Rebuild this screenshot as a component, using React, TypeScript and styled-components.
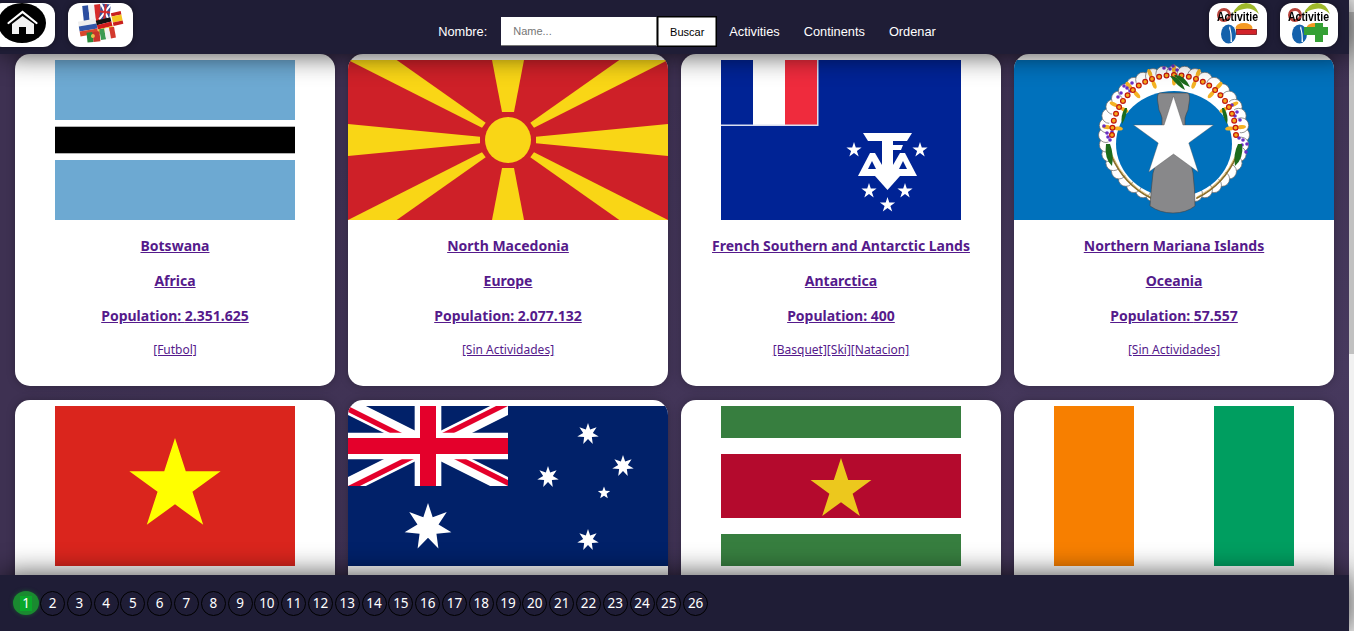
import React from 'react';
import styled, { createGlobalStyle } from 'styled-components';

const GlobalStyle = createGlobalStyle`
  html, body, #root {
    margin: 0;
    height: 100%;
    overflow: hidden;
  }
  body {
    font-family: "Noto Sans", "Liberation Sans", sans-serif;
  }
`;

const starPoints = (cx: number, cy: number, R: number, n = 5, ratio = 0.382) => {
  const pts: string[] = [];
  for (let i = 0; i < n * 2; i++) {
    const rad = i % 2 === 0 ? R : R * ratio;
    const a = -Math.PI / 2 + (i * Math.PI) / n;
    pts.push(`${(cx + rad * Math.cos(a)).toFixed(2)},${(cy + rad * Math.sin(a)).toFixed(2)}`);
  }
  return pts.join(' ');
};

const FlagSvg = styled.svg`
  display: block;
  height: 160px;
  flex: none;
`;

const Botswana = () => (
  <FlagSvg width="240" viewBox="0 0 240 160">
    <rect width="240" height="160" fill="#fff" />
    <rect width="240" height="60" fill="#6DA9D2" />
    <rect y="66.7" width="240" height="26.6" fill="#000" />
    <rect y="100" width="240" height="60" fill="#6DA9D2" />
  </FlagSvg>
);

const Macedonia = () => (
  <FlagSvg width="320" viewBox="0 0 320 160">
    <rect width="320" height="160" fill="#CE2028" />
    <g fill="#F9D616">
      <polygon points="144,0 176,0 166,52 154,52" />
      <polygon points="144,160 176,160 166,108 154,108" />
      <polygon points="0,64 0,96 132,83.3 132,76.7" />
      <polygon points="320,64 320,96 188,83.3 188,76.7" />
      <polygon points="0,0 48.7,0 137.7,62.7 134,67.7" />
      <polygon points="320,0 271.3,0 182.3,62.7 186,67.7" />
      <polygon points="0,160 48.7,160 137.7,97.3 134,92.3" />
      <polygon points="320,160 271.3,160 182.3,97.3 186,92.3" />
      <circle cx="160" cy="80" r="23" />
    </g>
  </FlagSvg>
);

const Taaf = () => (
  <FlagSvg width="240" viewBox="0 0 240 160">
    <rect width="240" height="160" fill="#002395" />
    <rect width="97.5" height="66" fill="#d9deef" />
    <rect width="32" height="64.5" fill="#002395" />
    <rect x="32" width="32" height="64.5" fill="#fff" />
    <rect x="64" width="32" height="64.5" fill="#EF2B3D" />
    <g fill="#fff">
      <polygon points="142,73 191,73 186,81 172,81 172,85 182,85 180,90 172,90 172,116 161,116 161,81 147,81" />
      <polygon points="137,116 149,93 154,93 161,105 161,116" />
      <polygon points="196,116 184,93 179,93 172,105 172,116" />
      <polygon points="154,116 179,116 166.5,130" />
    </g>
    <g fill="#002395">
      <polygon points="151,101 155,109 147,109" />
      <polygon points="182,101 178,109 186,109" />
    </g>
    <g fill="#fff">
      {[[133, 90], [199, 90], [148, 131], [184, 131], [166.5, 145]].map(([x, y]) => (
        <polygon key={`${x}-${y}`} points={starPoints(x, y, 8)} />
      ))}
    </g>
  </FlagSvg>
);

const scallops = Array.from({ length: 40 }, (_, i) => (i / 40) * Math.PI * 2);
const beads = Array.from({ length: 27 }, (_, i) => Math.PI + (i / 26) * Math.PI);
const purple = [
  [113, 28], [107, 33], [118, 23], [110, 26], [116, 31], [104, 37], [223, 52], [226, 60], [218, 45], [221, 56],
  [93, 73], [96, 80], [90, 66], [94, 77], [98, 72], [228, 85], [232, 92], [225, 78], [229, 80], [233, 84],
  [156, 9], [163, 10], [150, 8], [159, 6],
];

const Mariana = () => (
  <FlagSvg width="320" viewBox="0 0 320 160">
    <rect width="320" height="160" fill="#0071BC" />
    {scallops.map((a) => (
      <circle
        key={a}
        cx={160 + 68 * Math.cos(a)}
        cy={75 + 62 * Math.sin(a)}
        r="7.5"
        fill="#fff"
        stroke="#666"
        strokeWidth="0.7"
      />
    ))}
    <ellipse cx="160" cy="75" rx="66" ry="60" fill="#fff" />
    <ellipse cx="160" cy="84" rx="58" ry="53" fill="#0071BC" />
    <g fill="none" strokeLinecap="round">
      <path d="M97 95Q110 125 137 138" stroke="#8a6d2a" strokeWidth="1.8" />
      <path d="M223 95Q210 125 183 138" stroke="#8a6d2a" strokeWidth="1.8" />
      <path d="M98 95Q111 124 137 137" stroke="#d0a030" strokeWidth="0.6" />
      <path d="M222 95Q209 124 183 137" stroke="#d0a030" strokeWidth="0.6" />
    </g>
    <g fill="#F5B324">
      {beads.filter((_, i) => i % 3 === 1).flatMap((a) => {
        const deg = (a * 180) / Math.PI + 90;
        return [6, -6].map((off) => {
          const cx = 160 + (62 + off) * Math.cos(a);
          const cy = 75 + (60 + off) * Math.sin(a);
          return <ellipse key={`${a}-${off}`} cx={cx} cy={cy} rx="2" ry="4.5" transform={`rotate(${deg} ${cx} ${cy})`} />;
        });
      })}
    </g>
    <g fill="#6a2fc4">
      {purple.map(([x, y]) => (
        <circle key={`${x}-${y}`} cx={x} cy={y} r="1.8" />
      ))}
    </g>
    {beads.map((a) => (
      <circle
        key={a}
        cx={160 + 62 * Math.cos(a)}
        cy={75 + 60 * Math.sin(a)}
        r="2.4"
        fill="#F7A81B"
        stroke="#C1170F"
        strokeWidth="1.2"
      />
    ))}
    <g fill="#1c6b1c">
      <path d="M92 84Q90 98 98 106Q100 94 96 84Z" />
      <path d="M228 84Q230 98 221 106Q219 94 224 84Z" />
      <path d="M156 16Q166 16 171 30Q163 26 156 16Z" />
      <path d="M160 15Q170 14 176 27Q167 24 160 15Z" />
      <path d="M111 48Q106 56 108 64Q113 56 113 48Z" />
      <path d="M210 48Q215 56 213 64Q208 56 208 48Z" />
    </g>
    <path
      d="M146 33H173Q176 33 175.5 40L174 50Q172 54 171 58L171 70L176 100L179 113Q181 130 181 146Q172 153 159 153Q146 153 136 146Q137 130 139 113L143 100L148 70L148 58Q147 54 145 50L143.5 40Q143 33 146 33Z"
      fill="#88888a"
      stroke="#444"
      strokeWidth="0.6"
    />
    <polygon points={starPoints(159.5, 78, 42)} fill="#fff" stroke="#555" strokeWidth="0.4" />
  </FlagSvg>
);

const Vietnam = () => (
  <FlagSvg width="240" viewBox="0 0 240 160">
    <rect width="240" height="160" fill="#DA251D" />
    <polygon points={starPoints(120, 80, 48)} fill="#FF0" />
  </FlagSvg>
);

const Australia = () => (
  <FlagSvg width="320" viewBox="0 0 320 160">
    <rect width="320" height="160" fill="#012169" />
    <svg width="160" height="80" viewBox="0 0 60 30">
      <clipPath id="jack-t">
        <path d="M30,15 h30 v15 z v15 h-30 z h-30 v-15 z v-15 h30 z" />
      </clipPath>
      <path d="M0,0 L60,30 M60,0 L0,30" stroke="#fff" strokeWidth="6" />
      <path d="M0,0 L60,30 M60,0 L0,30" clipPath="url(#jack-t)" stroke="#E4002B" strokeWidth="4" />
      <path d="M30,0 v30 M0,15 h60" stroke="#fff" strokeWidth="10" />
      <path d="M30,0 v30 M0,15 h60" stroke="#E4002B" strokeWidth="6" />
    </svg>
    <g fill="#fff">
      <polygon points={starPoints(80, 121, 24, 7, 0.45)} />
      <polygon points={starPoints(240, 28, 11, 7, 0.45)} />
      <polygon points={starPoints(275, 60, 11, 7, 0.45)} />
      <polygon points={starPoints(200, 71, 11, 7, 0.45)} />
      <polygon points={starPoints(256, 87, 6.5, 5, 0.42)} />
      <polygon points={starPoints(240, 134, 11, 7, 0.45)} />
    </g>
  </FlagSvg>
);

const Suriname = () => (
  <FlagSvg width="240" viewBox="0 0 240 160">
    <rect width="240" height="160" fill="#fff" />
    <rect width="240" height="32" fill="#377E3F" />
    <rect y="48" width="240" height="64" fill="#B40A2D" />
    <rect y="128" width="240" height="32" fill="#377E3F" />
    <polygon points={starPoints(120, 84, 32)} fill="#ECC81D" />
  </FlagSvg>
);

const Ivory = () => (
  <FlagSvg width="240" viewBox="0 0 240 160">
    <rect width="240" height="160" fill="#fff" />
    <rect width="80" height="160" fill="#F77F00" />
    <rect x="160" width="80" height="160" fill="#009E60" />
  </FlagSvg>
);

const countries = [
  { id: 'bw', flag: <Botswana />, info: { name: 'Botswana', continent: 'Africa', population: '2.351.625', activities: ['Futbol'] } },
  { id: 'mk', flag: <Macedonia />, info: { name: 'North Macedonia', continent: 'Europe', population: '2.077.132', activities: ['Sin Actividades'] } },
  { id: 'tf', flag: <Taaf />, info: { name: 'French Southern and Antarctic Lands', continent: 'Antarctica', population: '400', activities: ['Basquet', 'Ski', 'Natacion'] } },
  { id: 'mp', flag: <Mariana />, info: { name: 'Northern Mariana Islands', continent: 'Oceania', population: '57.557', activities: ['Sin Actividades'] } },
  { id: 'vn', flag: <Vietnam /> },
  { id: 'au', flag: <Australia /> },
  { id: 'sr', flag: <Suriname /> },
  { id: 'ci', flag: <Ivory /> },
];

const Shell = styled.div`
  display: flex;
  height: 100vh;
  overflow: hidden;
`;

const Column = styled.div`
  flex: 1;
  min-width: 0;
  display: flex;
  flex-direction: column;
`;

const ScrollRail = styled.div`
  width: 5px;
  flex: none;
  background: #f1f1f1;
  padding-top: 12px;
`;

const ScrollThumb = styled.div`
  height: 342px;
  background: #c1c1c1;
`;

const Header = styled.header`
  position: relative;
  z-index: 2;
  flex: none;
  height: 54px;
  box-sizing: border-box;
  padding: 3px 11px 0 0;
  display: flex;
  justify-content: space-between;
  align-items: flex-start;
  background: #1f1d36;
  box-shadow: 0 0 28px rgba(0, 0, 0, 0.75);
`;

const IconGroup = styled.div`
  display: flex;
  gap: 13px;
`;

const HomeGroup = styled(IconGroup)`
  margin-left: -10px;
`;

const IconButton = styled.a<{ $wide?: boolean }>`
  display: block;
  width: ${(p) => (p.$wide ? '65px' : '58px')};
  height: 44px;
  background: #fff;
  border-radius: 12px;
  overflow: hidden;
  box-shadow: 0 0 6px rgba(0, 0, 0, 0.4);

  svg {
    display: block;
    filter: blur(0.35px);
  }
`;

const Nav = styled.nav`
  margin: 13px 0 0 32px;
  display: flex;
  align-items: center;
  height: 31px;
  font-family: "Liberation Sans", Arial, sans-serif;
  font-size: 12.8px;
  color: #fff;
`;

const NavLabel = styled.label`
  margin-right: 14px;
`;

const NameInput = styled.input`
  width: 156px;
  height: 29px;
  box-sizing: border-box;
  border: 0;
  border-bottom: 1px solid #767676;
  border-right: 1px solid #767676;
  padding: 0 12px;
  background: #fff;
  font-family: "Liberation Sans", Arial, sans-serif;
  font-size: 11px;

  &::placeholder {
    color: #757575;
  }
`;

const SearchButton = styled.button`
  width: 60px;
  height: 31px;
  box-sizing: border-box;
  border: 1px solid #000;
  background: #fff;
  color: #000;
  padding: 0;
  font-family: "Liberation Sans", Arial, sans-serif;
  font-size: 11px;
  box-shadow: inset 0 0 0 0.5px #000;
`;

const NavItem = styled.span<{ $gap: number }>`
  margin-left: ${(p) => p.$gap}px;
`;

const Main = styled.main`
  flex: 1;
  min-height: 0;
  overflow: hidden;
  padding: 0 15px;
  background: radial-gradient(ellipse at 100% 60%, #47395e 0%, #3e3152 70%);
`;

const Grid = styled.div`
  display: grid;
  grid-template-columns: repeat(4, 320px);
  column-gap: 13px;
  row-gap: 14px;
`;

const Card = styled.article`
  height: 332px;
  box-sizing: border-box;
  padding-top: 6px;
  border-radius: 15px;
  background: #fff;
  box-shadow: 0 0 8px rgba(0, 0, 0, 0.25);
  display: flex;
  flex-direction: column;
  align-items: center;
  overflow: hidden;
`;

const CardLink = styled.a`
  display: block;
  margin-top: 15px;
  line-height: 20px;
  font-size: 14px;
  font-weight: 700;
  color: #551a8b;
  text-decoration: underline;

  &:first-of-type {
    margin-top: 16px;
  }
`;

const ActivityRow = styled.div`
  margin-top: 16px;
  line-height: 16px;
  font-size: 12px;
  color: #551a8b;
  text-decoration: underline;
`;

const Footer = styled.footer`
  position: relative;
  z-index: 2;
  flex: none;
  height: 56px;
  box-sizing: border-box;
  padding: 0 0 0 13px;
  display: flex;
  align-items: center;
  gap: 1.8px;
  background: #1f1d36;
  box-shadow: 0 0 28px rgba(0, 0, 0, 0.75);
`;

const PageItem = styled.a<{ $active?: boolean }>`
  width: ${(p) => (p.$active ? '26px' : '25px')};
  height: ${(p) => (p.$active ? '24px' : '25px')};
  margin-right: ${(p) => (p.$active ? '-0.8px' : '0')};
  box-sizing: border-box;
  border: ${(p) => (p.$active ? '0' : '1px solid #000')};
  border-radius: 50%;
  background: ${(p) => (p.$active ? '#1a8a30' : 'transparent')};
  box-shadow: ${(p) => (p.$active ? '0 0 4px rgba(26, 138, 48, 0.5)' : 'none')};
  color: #fff;
  display: flex;
  align-items: center;
  justify-content: center;
  font-size: 13.5px;
  line-height: 15px;
`;

const PageNumber = styled.span<{ $active?: boolean }>`
  display: block;
  padding: 0 2px;
  background: ${(p) => (p.$active ? '#0aa82a' : 'transparent')};
`;

const HomeIcon = () => (
  <svg width="65" height="44" viewBox="0 0 65 44">
    <ellipse cx="32" cy="20" rx="24" ry="20" fill="#000" />
    <path d="M18.5 20 32.5 9l14 11" fill="none" stroke="#fff" strokeWidth="2.2" strokeLinecap="round" />
    <path d="M32.5 13 22 21v10h7v-7h7v7h8V21Z" fill="#f2f2f2" />
  </svg>
);

const FlagsIcon = () => (
  <svg width="65" height="44" viewBox="0 0 65 44">
    <g transform="rotate(-6 23 10)">
      <rect x="15" y="2" width="6" height="17" fill="#2c4ea0" />
      <rect x="21" y="2" width="6" height="17" fill="#f4f4f4" />
      <rect x="27" y="2" width="6" height="17" fill="#d62b2b" />
    </g>
    <g transform="rotate(6 37 9)">
      <rect x="32" y="1" width="10" height="16" fill="#3a4f9a" />
      <path d="M32 1l10 16M42 1 32 17" stroke="#fff" strokeWidth="2" />
      <path d="M37 1v16M32 9h10" stroke="#d62b2b" strokeWidth="2" />
    </g>
    <g transform="rotate(-10 20 24)">
      <rect x="11" y="17" width="18" height="5" fill="#eee" />
      <rect x="11" y="22" width="18" height="5" fill="#3156a8" />
      <rect x="11" y="27" width="18" height="5" fill="#d9482b" />
    </g>
    <g transform="rotate(-14 36 22)">
      <rect x="29" y="16" width="15" height="4.5" fill="#111" />
      <rect x="29" y="20.5" width="15" height="4.5" fill="#d01c1c" />
      <rect x="29" y="25" width="15" height="4.5" fill="#f3c316" />
    </g>
    <g transform="rotate(-12 49 15)">
      <rect x="44" y="9" width="10" height="3.5" fill="#c8201e" />
      <rect x="44" y="12.5" width="10" height="6" fill="#f4c51f" />
      <rect x="44" y="18.5" width="10" height="3.5" fill="#c8201e" />
    </g>
    <g transform="rotate(-6 25 34)">
      <rect x="19" y="29" width="6" height="10" fill="#2a8a3a" />
      <rect x="25" y="29" width="7" height="10" fill="#c8352a" />
      <circle cx="25" cy="33" r="2" fill="#e6c34a" />
    </g>
    <g transform="rotate(-10 39 30)">
      <rect x="32" y="25" width="5" height="11" fill="#3b9a52" />
      <rect x="37" y="25" width="5" height="11" fill="#f2f2f2" />
      <rect x="42" y="25" width="5" height="11" fill="#d33a2e" />
    </g>
  </svg>
);

const ActivityIcon = ({ mode }: { mode: 'remove' | 'add' }) => (
  <svg width="58" height="44" viewBox="0 0 58 44">
    <circle cx="15" cy="12" r="5.5" fill="none" stroke="#b8433c" strokeWidth="3" />
    <path d="M24 11Q27 1 37 0Q46 0 50 11Q42 4 35 6Q28 7 24 11Z" fill="#9fb92b" />
    <ellipse cx="35" cy="25" rx="8.5" ry="5" fill="#f59a23" />
    <ellipse cx="19.5" cy="31" rx="7.5" ry="9.5" fill="#1461ac" />
    <path d="M21 23Q23 30 23 39L21.5 39Q22 30 20 25Z" fill="#fff" />
    <text
      x="8"
      y="18"
      fontFamily="Liberation Sans, Arial, sans-serif"
      fontWeight="700"
      fontSize="12"
      textLength="41"
      lengthAdjust="spacingAndGlyphs"
      fill="#000"
    >
      Activitie
    </text>
    {mode === 'remove' ? (
      <rect x="27.5" y="26.5" width="20" height="5" fill="#d2232a" stroke="#7c1418" strokeWidth="0.8" />
    ) : (
      <path d="M24 24h11v-4h8v4h5v8h-5v7h-8v-7H24Z" fill="#35a035" />
    )}
  </svg>
);

const App = () => (
  <Shell>
    <GlobalStyle />
    <Column>
      <Header>
        <HomeGroup>
          <IconButton $wide>
            <HomeIcon />
          </IconButton>
          <IconButton $wide>
            <FlagsIcon />
          </IconButton>
        </HomeGroup>
        <Nav>
          <NavLabel>Nombre:</NavLabel>
          <NameInput placeholder="Name..." />
          <SearchButton>Buscar</SearchButton>
          <NavItem $gap={12}>Activities</NavItem>
          <NavItem $gap={24}>Continents</NavItem>
          <NavItem $gap={24}>Ordenar</NavItem>
        </Nav>
        <IconGroup>
          <IconButton>
            <ActivityIcon mode="remove" />
          </IconButton>
          <IconButton>
            <ActivityIcon mode="add" />
          </IconButton>
        </IconGroup>
      </Header>
      <Main>
        <Grid>
          {countries.map((c) => (
            <Card key={c.id}>
              {c.flag}
              {c.info && (
                <>
                  <CardLink>{c.info.name}</CardLink>
                  <CardLink>{c.info.continent}</CardLink>
                  <CardLink>Population: {c.info.population}</CardLink>
                  <ActivityRow>{c.info.activities.map((a) => `[${a}]`).join('')}</ActivityRow>
                </>
              )}
            </Card>
          ))}
        </Grid>
      </Main>
      <Footer>
        {Array.from({ length: 26 }, (_, i) => (
          <PageItem key={i} $active={i === 0}>
            <PageNumber $active={i === 0}>{i + 1}</PageNumber>
          </PageItem>
        ))}
      </Footer>
    </Column>
    <ScrollRail>
      <ScrollThumb />
    </ScrollRail>
  </Shell>
);

export default App;
